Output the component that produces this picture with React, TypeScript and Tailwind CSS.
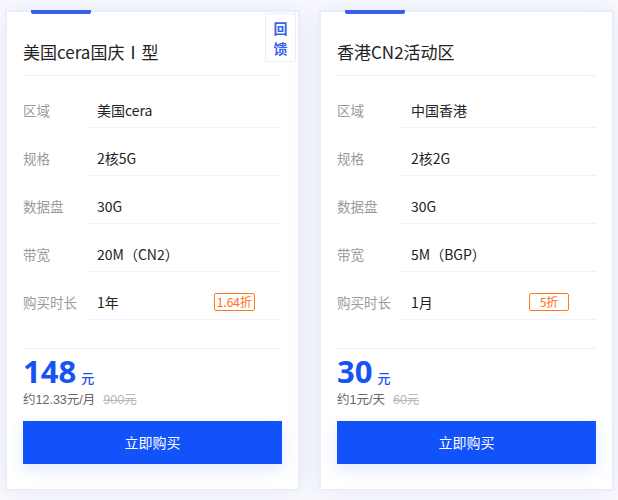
type Plan = {
  title: string;
  specs: { label: string; value: string }[];
  term: string;
  discount: string;
  price: string;
  perUnit: string;
  original: string;
  feedback?: boolean;
};

const plans: Plan[] = [
  {
    title: "美国cera国庆Ⅰ型",
    specs: [
      { label: "区域", value: "美国cera" },
      { label: "规格", value: "2核5G" },
      { label: "数据盘", value: "30G" },
      { label: "带宽", value: "20M（CN2）" },
    ],
    term: "1年",
    discount: "1.64折",
    price: "148",
    perUnit: "约12.33元/月",
    original: "900元",
    feedback: true,
  },
  {
    title: "香港CN2活动区",
    specs: [
      { label: "区域", value: "中国香港" },
      { label: "规格", value: "2核2G" },
      { label: "数据盘", value: "30G" },
      { label: "带宽", value: "5M（BGP）" },
    ],
    term: "1月",
    discount: "5折",
    price: "30",
    perUnit: "约1元/天",
    original: "60元",
  },
];

const font = { fontFamily: '"Noto Sans CJK SC", "Noto Sans", sans-serif' };

const SpecRow = ({ label, children }: { label: string; children: React.ReactNode }): React.ReactNode => (
  <div className="flex h-12">
    <div className="w-[65px] shrink-0 flex items-end pb-[8px] text-[13.5px] leading-5 text-[#9a9a9a]">{label}</div>
    <div className="flex-1 flex items-end pb-[7px] pl-[9px] border-b border-[#eef0fa] text-[14px] leading-5 text-[#222]">
      {children}
    </div>
  </div>
);

const PlanCard = ({ plan }: { plan: Plan }): React.ReactNode => (
  <div className="relative w-[295px] h-[481px] border-2 border-[#eaedfb] bg-white shadow-[0_0_28px_rgba(200,208,240,0.45)]">
    <div className="absolute -top-[2px] left-[24px] w-[60px] h-[4px] rounded-b-[2px] bg-[#3a5ee8]" />
    {plan.feedback && (
      <div className="absolute top-[1px] left-[258px] w-[31px] h-[49px] border border-[#eceef8] bg-white flex flex-col items-center justify-center gap-[2px] text-[14px] leading-[18px] font-bold text-[#3d63e8]">
        <span>回</span>
        <span>馈</span>
      </div>
    )}
    <div className="px-[16px]">
      <div className="h-[64px] pt-[28px] border-b border-[#eef0fa] text-[17px] leading-6 text-[#222]">
        {plan.title}
      </div>
      <div className="mt-[4px]">
        {plan.specs.map((s) => (
          <SpecRow key={s.label} label={s.label}>
            {s.value}
          </SpecRow>
        ))}
        <SpecRow label="购买时长">
          <div className="flex-1 flex items-center justify-between pr-[27px]">
            <span>{plan.term}</span>
            <span className="min-w-[40px] h-[18px] px-[2px] flex items-center justify-center rounded-[2px] border border-[#ff7a1a] text-[12px] leading-none text-[#ff6d0a]">
              {plan.discount}
            </span>
          </div>
        </SpecRow>
      </div>
      <div className="mt-[28px] border-t border-[#eef0fa] pt-[7px]">
        <div className="flex items-end gap-[5px] h-[31px] text-[#1553f5]">
          <span className="text-[31px] leading-[31px] font-bold" style={{ fontFamily: '"Open Sans", sans-serif' }}>
            {plan.price}
          </span>
          <span className="text-[13px] leading-[16px] font-medium pb-[1px]">元</span>
        </div>
        <div
          className="flex items-center gap-[8px] mt-[5px] text-[12.5px] leading-[16px]"
          style={{ fontFamily: '"Liberation Sans", "Noto Sans CJK SC", sans-serif' }}
        >
          <span className="text-[#666]">{plan.perUnit}</span>
          <span className="text-[#b3b8c4] line-through">{plan.original}</span>
        </div>
      </div>
      <button className="mt-[13px] w-full h-[43px] bg-[#1152fb] text-white text-[14px] shadow-[0_6px_16px_rgba(17,82,251,0.12)]">
        立即购买
      </button>
    </div>
  </div>
);

export default function App(): React.ReactNode {
  return (
    <div className="w-[618px] h-[500px] bg-[#fbfbfe] overflow-hidden" style={font}>
      <div className="flex gap-[19px] pl-[5px] pt-[10px]">
        {plans.map((p) => (
          <PlanCard key={p.title} plan={p} />
        ))}
      </div>
    </div>
  );
}
